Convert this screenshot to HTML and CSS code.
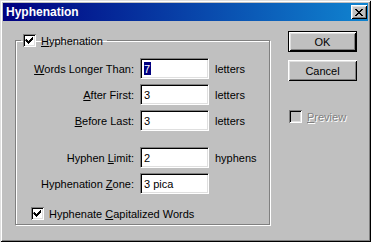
FILE: index.html
```html
<!DOCTYPE html>
<html lang="en">
<head>
    <meta charset="UTF-8">
    <title>Hyphenation</title>
    <link rel="stylesheet" href="styles.css">
</head>
<body>
    <div class="window">
        <div class="titlebar">
            <span class="title">Hyphenation</span>
            <span class="close">
                <svg width="8" height="7" viewBox="0 0 8 7">
                    <path d="M0 0h2v1h1v1h2v-1h1v-1h2v1h-1v1h-1v1h-1v1h1v1h1v1h1v1h-2v-1h-1v-1h-2v1h-1v1h-2v-1h1v-1h1v-1h1v-1h-1v-1h-1v-1h-1z" fill="#000"/>
                </svg>
            </span>
        </div>
        <div class="content">
            <fieldset class="group">
                <legend class="check-label">
                    <span class="checkbox checked"></span>
                    <span><u>H</u>yphenation</span>
                </legend>

                <div class="fields">
                    <label class="label"><u>W</u>ords Longer Than:</label>
                    <span class="input"><span class="selected">7</span></span>
                    <span class="unit">letters</span>

                    <label class="label"><u>A</u>fter First:</label>
                    <span class="input">3</span>
                    <span class="unit">letters</span>

                    <label class="label"><u>B</u>efore Last:</label>
                    <span class="input">3</span>
                    <span class="unit">letters</span>
                </div>

                <div class="fields fields-lower">
                    <label class="label">Hyphen <u>L</u>imit:</label>
                    <span class="input">2</span>
                    <span class="unit">hyphens</span>

                    <label class="label">Hyphenation <u>Z</u>one:</label>
                    <span class="input">3 pica</span>
                    <span class="unit"></span>
                </div>

                <div class="check-label capitalized">
                    <span class="checkbox checked"></span>
                    <span>Hyphenate <u>C</u>apitalized Words</span>
                </div>
            </fieldset>

            <div class="actions">
                <button class="btn default"><span>OK</span></button>
                <button class="btn">Cancel</button>
                <div class="check-label disabled">
                    <span class="checkbox"></span>
                    <span><u>P</u>review</span>
                </div>
            </div>
        </div>
    </div>
</body>
</html>
```

FILE: styles.css
```css
body {
    margin: 0;
    font-family: "Liberation Sans", Arial, sans-serif;
    font-size: 11px;
    color: #000;
    background-color: #c0c0c0;
}
.window {
    box-sizing: border-box;
    width: 371px;
    height: 242px;
    padding: 3px;
    background-color: #c0c0c0;
    box-shadow: inset 1px 1px 0 #dfdfdf, inset -1px -1px 0 #000,
                inset 2px 2px 0 #fff, inset -2px -2px 0 #808080;
}
.titlebar {
    height: 18px;
    display: flex;
    align-items: center;
    justify-content: space-between;
    padding: 0 1px 0 3px;
    background: linear-gradient(to right, #000080, #1084d0);
}
.title {
    color: #fff;
    font-weight: bold;
    font-size: 12px;
}
.close {
    box-sizing: border-box;
    width: 16px;
    height: 14px;
    display: flex;
    align-items: center;
    justify-content: center;
    background-color: #c0c0c0;
    box-shadow: inset 1px 1px 0 #fff, inset -1px -1px 0 #000,
                inset 2px 2px 0 #dfdfdf, inset -2px -2px 0 #808080;
}
.content {
    display: flex;
    align-items: flex-start;
    padding: 10px 0 0 12px;
}
.group {
    box-sizing: border-box;
    width: 255px;
    margin: 3px 0 0 0;
    padding: 11px 0 4px 0;
    border: 1px solid #808080;
    box-shadow: inset 1px 1px 0 #fff, 1px 1px 0 #fff;
}
.group legend {
    margin-left: 5px;
    padding: 0 4px 0 2px;
}
.check-label {
    display: flex;
    align-items: center;
    gap: 5px;
    height: 13px;
}
.checkbox {
    box-sizing: border-box;
    width: 13px;
    height: 13px;
    background-color: #fff;
    box-shadow: inset 1px 1px 0 #808080, inset -1px -1px 0 #fff,
                inset 2px 2px 0 #000, inset -2px -2px 0 #dfdfdf;
    flex-shrink: 0;
}
.checkbox.checked {
    background-image: url("data:image/svg+xml;utf8,<svg xmlns='http://www.w3.org/2000/svg' width='13' height='13'><path d='M3 5h1v1h1v1h1v-1h1v-1h1v-1h1v-1h1v3h-1v1h-1v1h-1v1h-1v1h-1v-1h-1v-1h-1v-1h-1z' fill='black'/></svg>");
}
.fields {
    display: grid;
    grid-template-columns: 118px 69px auto;
    column-gap: 6px;
    row-gap: 5px;
    align-items: center;
}
.fields-lower {
    margin-top: 16px;
}
.label {
    text-align: right;
}
.input {
    box-sizing: border-box;
    height: 21px;
    padding: 3px 0 0 3px;
    background-color: #fff;
    border-top: 1px solid #808080;
    border-left: 1px solid #808080;
    border-bottom: 1px solid #fff;
    border-right: 1px solid #fff;
    box-shadow: inset 1px 1px 0 #000, inset -1px -1px 0 #dfdfdf;
    line-height: 14px;
}
.selected {
    background-color: #000080;
    color: #fff;
    padding: 1px 1px 0 0;
}
.capitalized {
    margin: 13px 0 0 15px;
}
.actions {
    display: flex;
    flex-direction: column;
    margin-left: 18px;
}
.btn {
    box-sizing: border-box;
    width: 69px;
    height: 21px;
    padding: 0;
    font: inherit;
    color: #000;
    background-color: #c0c0c0;
    border: none;
    box-shadow: inset 1px 1px 0 #fff, inset -1px -1px 0 #000,
                inset 2px 2px 0 #dfdfdf, inset -2px -2px 0 #808080;
}
.btn.default {
    border: 1px solid #000;
}
.btn + .btn {
    margin-top: 8px;
}
.disabled {
    margin: 29px 0 0 1px;
    color: #808080;
    text-shadow: 1px 1px 0 #fff;
}
.disabled .checkbox {
    background-color: #c0c0c0;
}
```
